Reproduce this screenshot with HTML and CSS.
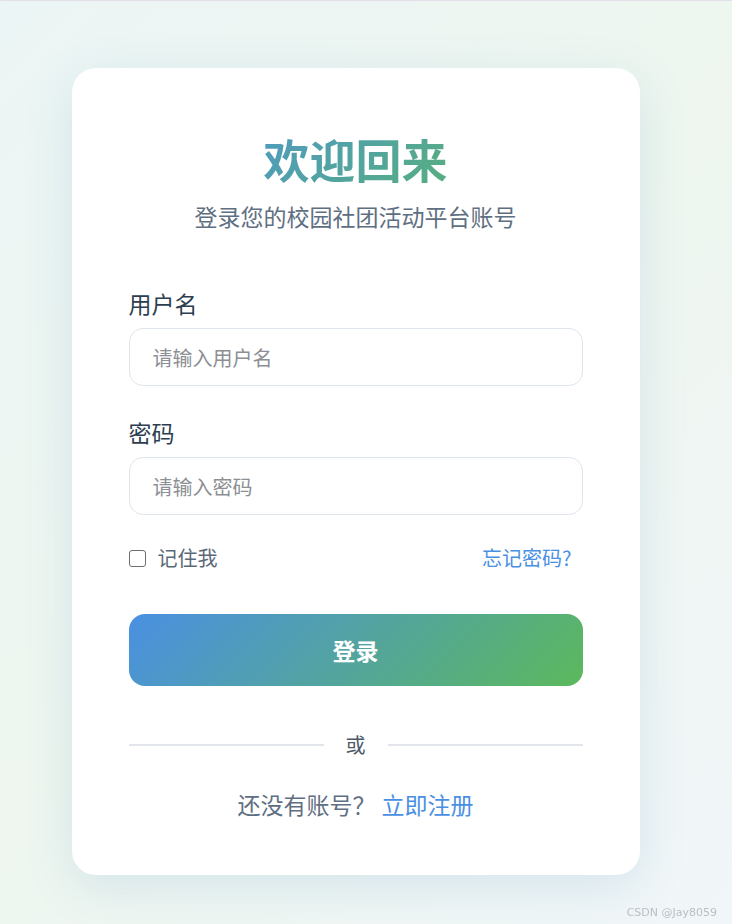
FILE: index.html
```html
<!DOCTYPE html>
<html lang="zh-CN">
<head>
    <meta charset="UTF-8">
    <meta name="viewport" content="width=device-width, initial-scale=1.0">
    <title>登录 - 校园社团活动平台</title>
    <link rel="stylesheet" href="styles.css">
</head>
<body>
    <div class="login-card">
        <div class="login-header">
            <h1>欢迎回来</h1>
            <p>登录您的校园社团活动平台账号</p>
        </div>

        <form class="login-form">
            <div class="form-group">
                <label for="username">用户名</label>
                <input type="text" id="username" placeholder="请输入用户名">
            </div>

            <div class="form-group">
                <label for="password">密码</label>
                <input type="password" id="password" placeholder="请输入密码">
            </div>

            <div class="form-options">
                <label class="remember">
                    <input type="checkbox">
                    <span>记住我</span>
                </label>
                <a href="#" class="link">忘记密码?</a>
            </div>

            <button type="submit" class="btn-login">登录</button>
        </form>

        <div class="divider"><span>或</span></div>

        <p class="register">还没有账号？<a href="#" class="link">立即注册</a></p>
    </div>

    <div class="watermark">CSDN @Jay8059</div>
</body>
</html>
```
FILE: styles.css
```css
/* Reset */
* {
    margin: 0;
    padding: 0;
    box-sizing: border-box;
}

body {
    font-family: "Noto Sans CJK SC", "Noto Sans", sans-serif;
    background: linear-gradient(135deg, #ecf5f5 0%, #eef6ef 50%, #f1f6f9 100%);
    border-top: 1px solid #e3e0ea;
    min-height: 100vh;
    display: flex;
    justify-content: center;
    align-items: flex-start;
    padding: 67px 21px 40px 0;
}

/* Kartu login */
.login-card {
    width: 568px;
    background-color: #fff;
    border-radius: 24px;
    padding: 63px 57px 56px;
    box-shadow: 0 12px 48px rgba(74, 144, 190, 0.16);
}

.login-header {
    text-align: center;
    margin-bottom: 57px;
}

.login-header h1 {
    font-size: 46px;
    line-height: 54px;
    font-weight: bold;
    background: linear-gradient(135deg, #4a90e2, #5cb85c);
    -webkit-background-clip: text;
    background-clip: text;
    color: transparent;
    margin-bottom: 16px;
}

.login-header p {
    font-size: 23px;
    line-height: 30px;
    color: #5f6f82;
}

.form-group {
    margin-bottom: 31px;
}

.form-group label {
    display: block;
    font-size: 23px;
    line-height: 30px;
    color: #2c3e50;
    margin-bottom: 10px;
}

.form-group input {
    width: 100%;
    height: 58px;
    border: 1px solid #dfe5ec;
    border-radius: 14px;
    padding: 0 23px;
    font-family: inherit;
    font-size: 20px;
    color: #2c3e50;
    outline: none;
}

.form-group input::placeholder {
    color: #8c8f94;
}

.form-options {
    display: flex;
    justify-content: space-between;
    align-items: center;
    line-height: 24px;
    font-size: 20px;
    margin-bottom: 44px;
}

.remember {
    display: flex;
    align-items: center;
    gap: 12px;
    color: #5a6878;
}

.remember input {
    appearance: none;
    -webkit-appearance: none;
    width: 17px;
    height: 17px;
    border: 1.5px solid #6e6e6e;
    border-radius: 3px;
    background: #fff;
}

.link {
    color: #4a90e2;
    text-decoration: none;
}

.form-options .link {
    margin-right: 11px;
}

.btn-login {
    width: 100%;
    height: 72px;
    border: none;
    border-radius: 16px;
    background: linear-gradient(135deg, #4a90e2, #5cb85c);
    color: #fff;
    font-family: inherit;
    font-size: 23px;
    font-weight: bold;
    cursor: pointer;
}

/* Garis pemisah */
.divider {
    display: flex;
    align-items: center;
    gap: 22px;
    margin-top: 49px;
    font-size: 20px;
    line-height: 20px;
    color: #4a5868;
}

.divider::before,
.divider::after {
    content: "";
    flex: 1;
    height: 2px;
    background-color: #e2e6ec;
}

.register {
    margin-top: 34px;
    text-align: center;
    font-size: 23px;
    line-height: 30px;
    color: #5f6f82;
}

.register .link {
    margin-left: 6px;
}

.watermark {
    position: fixed;
    right: 15px;
    bottom: 5px;
    font-family: "DejaVu Sans", sans-serif;
    font-size: 11px;
    color: #b9bfc6;
}
```
